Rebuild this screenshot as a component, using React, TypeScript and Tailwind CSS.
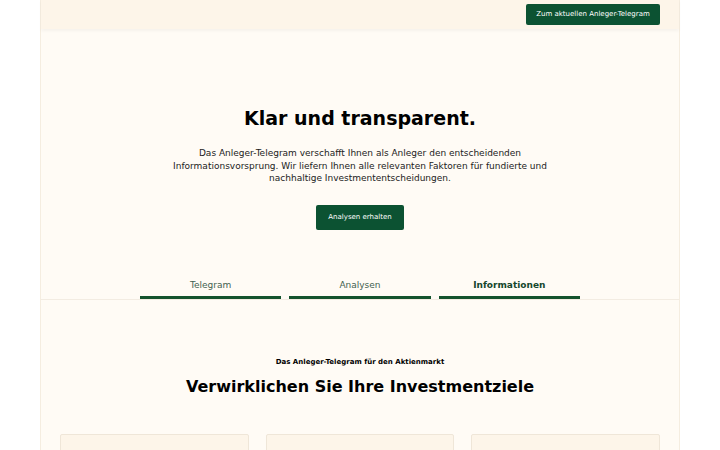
import React from 'react';

const tabs = [
    { label: 'Telegram', active: false },
    { label: 'Analysen', active: false },
    { label: 'Informationen', active: true },
];

const App: React.FC = () => {
    return (
        <div className="min-h-[450px] bg-white" style={{ fontFamily: '"DejaVu Sans", sans-serif' }}>
            <div className="mx-auto w-[640px] min-h-[450px] bg-[#fffbf5] border-x border-[#f5ede0]">
                {/* Header */}
                <header className="h-[29px] bg-[#fdf5e9] shadow-[0_2px_3px_rgba(0,0,0,0.04)] flex items-center justify-end pr-[19px]">
                    <a href="#" className="h-[21px] w-[134px] rounded-[2px] bg-[#0c5232] text-white text-[7px] flex items-center justify-center">
                        Zum aktuellen Anleger-Telegram
                    </a>
                </header>

                {/* Hero */}
                <section className="flex flex-col items-center pt-[80px] text-center">
                    <h1 className="text-[19px] font-bold text-black leading-none">Klar und transparent.</h1>
                    <p className="mt-[19px] w-[384px] text-[9px] leading-[12.5px] text-[#222]">
                        Das Anleger-Telegram verschafft Ihnen als Anleger den entscheidenden Informationsvorsprung. Wir liefern Ihnen alle relevanten Faktoren für fundierte und nachhaltige Investmententscheidungen.
                    </p>
                    <a href="#" className="mt-[20px] h-[25px] w-[88px] rounded-[2px] bg-[#0c5232] text-white text-[7px] flex items-center justify-center">
                        Analysen erhalten
                    </a>
                </section>

                {/* Tabs */}
                <nav className="mt-[49px] border-b border-[#f3ece2]">
                    <div className="mx-auto w-[440px] grid grid-cols-3 gap-[8px]">
                        {tabs.map((tab) => (
                            <div
                                key={tab.label}
                                className={`pb-[5px] text-center text-[9px] leading-[12px] border-b-[3px] border-[#14532d] ${tab.active ? 'font-bold text-[#14472c]' : 'text-[#3f6150]'}`}
                            >
                                {tab.label}
                            </div>
                        ))}
                    </div>
                </nav>

                {/* Features */}
                <section className="flex flex-col items-center pt-[58px]">
                    <div className="text-[7px] leading-[9px] font-bold text-black">Das Anleger-Telegram für den Aktienmarkt</div>
                    <h2 className="mt-[12px] text-[16px] font-bold text-black leading-none">Verwirklichen Sie Ihre Investmentziele</h2>
                    <div className="mt-[39px] w-[600px] grid grid-cols-3 gap-[17px]">
                        {[0, 1, 2].map((i) => (
                            <div key={i} className="h-[60px] rounded-t-[2px] bg-[#fdf5e9] border border-[#efe6d8]" />
                        ))}
                    </div>
                </section>
            </div>
        </div>
    );
};

export default App;
